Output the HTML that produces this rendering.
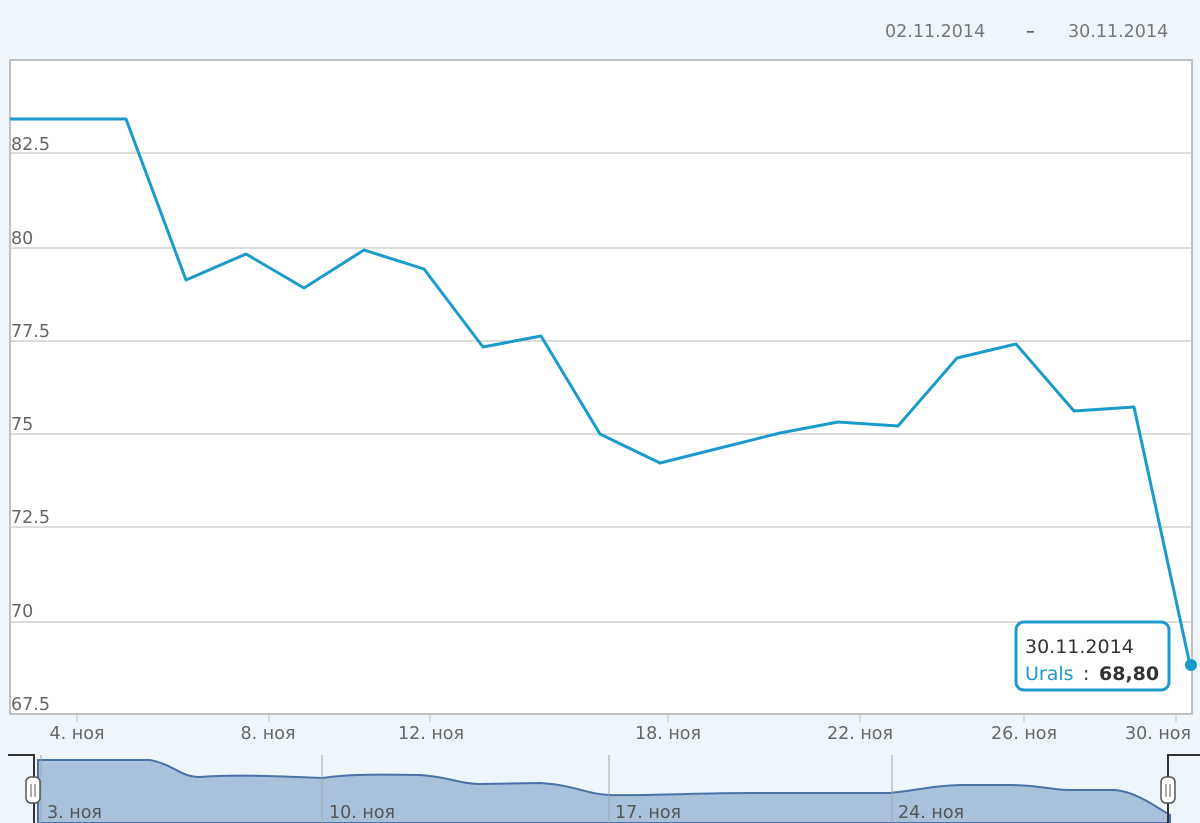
<!DOCTYPE html>
<html><head><meta charset="utf-8"><style>
html,body{margin:0;padding:0;background:#eef6fc;width:1200px;height:823px;overflow:hidden;font-family:"DejaVu Sans",sans-serif;}
</style></head><body>
<svg width="1200" height="823" xmlns="http://www.w3.org/2000/svg" style="position:absolute;left:0;top:0;font-family:'DejaVu Sans',sans-serif">
<rect width="1200" height="823" fill="#eef6fc"/>
<text x="885" y="37" font-size="17.5" fill="#777">02.11.2014</text>
<text x="1026" y="37" font-size="17.5" fill="#333">–</text>
<text x="1068" y="37" font-size="17.5" fill="#777">30.11.2014</text>
<rect x="10" y="60" width="1182" height="654" fill="#fff" stroke="#c0c0c0" stroke-width="2"/>
<g stroke="#c8c8c8" stroke-width="1.2">
<line x1="10" y1="153" x2="1192" y2="153"/><line x1="10" y1="248" x2="1192" y2="248"/>
<line x1="10" y1="341" x2="1192" y2="341"/><line x1="10" y1="434" x2="1192" y2="434"/>
<line x1="10" y1="527" x2="1192" y2="527"/><line x1="10" y1="622" x2="1192" y2="622"/>
</g>
<g font-size="17.5" fill="#666">
<text x="11" y="150">82.5</text><text x="11" y="244">80</text><text x="11" y="337">77.5</text>
<text x="11" y="430">75</text><text x="11" y="523">72.5</text><text x="11" y="617">70</text><text x="11" y="710">67.5</text>
</g>
<g stroke="#c0c0c0"><line x1="77" y1="715" x2="77" y2="722"/><line x1="269" y1="715" x2="269" y2="722"/><line x1="430" y1="715" x2="430" y2="722"/><line x1="668" y1="715" x2="668" y2="722"/><line x1="860" y1="715" x2="860" y2="722"/><line x1="1024" y1="715" x2="1024" y2="722"/><line x1="1176" y1="715" x2="1176" y2="722"/></g>
<g font-size="17.5" fill="#666" text-anchor="middle">
<text x="77" y="739">4. ноя</text><text x="268" y="739">8. ноя</text><text x="431" y="739">12. ноя</text>
<text x="668" y="739">18. ноя</text><text x="860" y="739">22. ноя</text><text x="1024" y="739">26. ноя</text><text x="1158" y="739">30. ноя</text>
</g>
<polyline fill="none" stroke="#1a9bcb" stroke-width="3" stroke-linejoin="round" points="10,119 126,119 186,280 246,254 304,288 364,250 424,269 483,347 541,336 600,434 660,463 720,448 780,433 838,422 898,426 957,358 1016,344 1074,411 1134,407 1190,665"/>
<circle cx="1191" cy="665" r="6" fill="#1a9bcb"/>
<rect x="1016" y="622" width="153" height="68" rx="8" fill="#fff" stroke="#1a9bcb" stroke-width="3"/>
<text x="1025" y="653" font-size="19" fill="#333">30.11.2014</text>
<text x="1025" y="680" font-size="19" fill="#1a9bcb">Urals</text>
<text x="1083" y="680" font-size="19" fill="#333">:</text>
<text x="1099" y="680" font-size="19" font-weight="bold" fill="#333">68,80</text>
<path d="M38,823 L38,760 L150,760 C175,765 180,777 200,777 C225,775 250,775 322,778 C345,775 360,774 420,775 C450,777 460,784 480,784 L540,783 C575,785 585,794 610,795 C640,796 700,793 750,793 L890,793 C920,790 930,786 960,785 L1010,785 C1040,785 1050,790 1070,790 L1115,790 C1135,792 1150,803 1170,815 L1170,823 Z" fill="#a9c1da" stroke="#4b72a8" stroke-width="2"/>
<g stroke="#9aa6b2" stroke-width="1"><line x1="41" y1="755" x2="41" y2="823"/><line x1="322" y1="755" x2="322" y2="823"/><line x1="609" y1="755" x2="609" y2="823"/><line x1="892" y1="755" x2="892" y2="823"/></g>
<g font-size="17.5" fill="#555"><text x="47" y="818">3. ноя</text><text x="329" y="818">10. ноя</text><text x="615" y="818">17. ноя</text><text x="898" y="818">24. ноя</text></g>
<path d="M8,755 L34,755 L34,823" fill="none" stroke="#333" stroke-width="2"/>
<path d="M1200,755 L1168,755 L1168,823" fill="none" stroke="#333" stroke-width="2"/>
<rect x="26" y="777" width="14" height="26" rx="5" fill="#fff" stroke="#555" stroke-width="1.5"/>
<line x1="31" y1="784" x2="31" y2="797" stroke="#555"/><line x1="35" y1="784" x2="35" y2="797" stroke="#555"/>
<rect x="1161" y="777" width="14" height="26" rx="5" fill="#fff" stroke="#555" stroke-width="1.5"/>
<line x1="1166" y1="784" x2="1166" y2="797" stroke="#555"/><line x1="1170" y1="784" x2="1170" y2="797" stroke="#555"/>
</svg>
</body></html>
